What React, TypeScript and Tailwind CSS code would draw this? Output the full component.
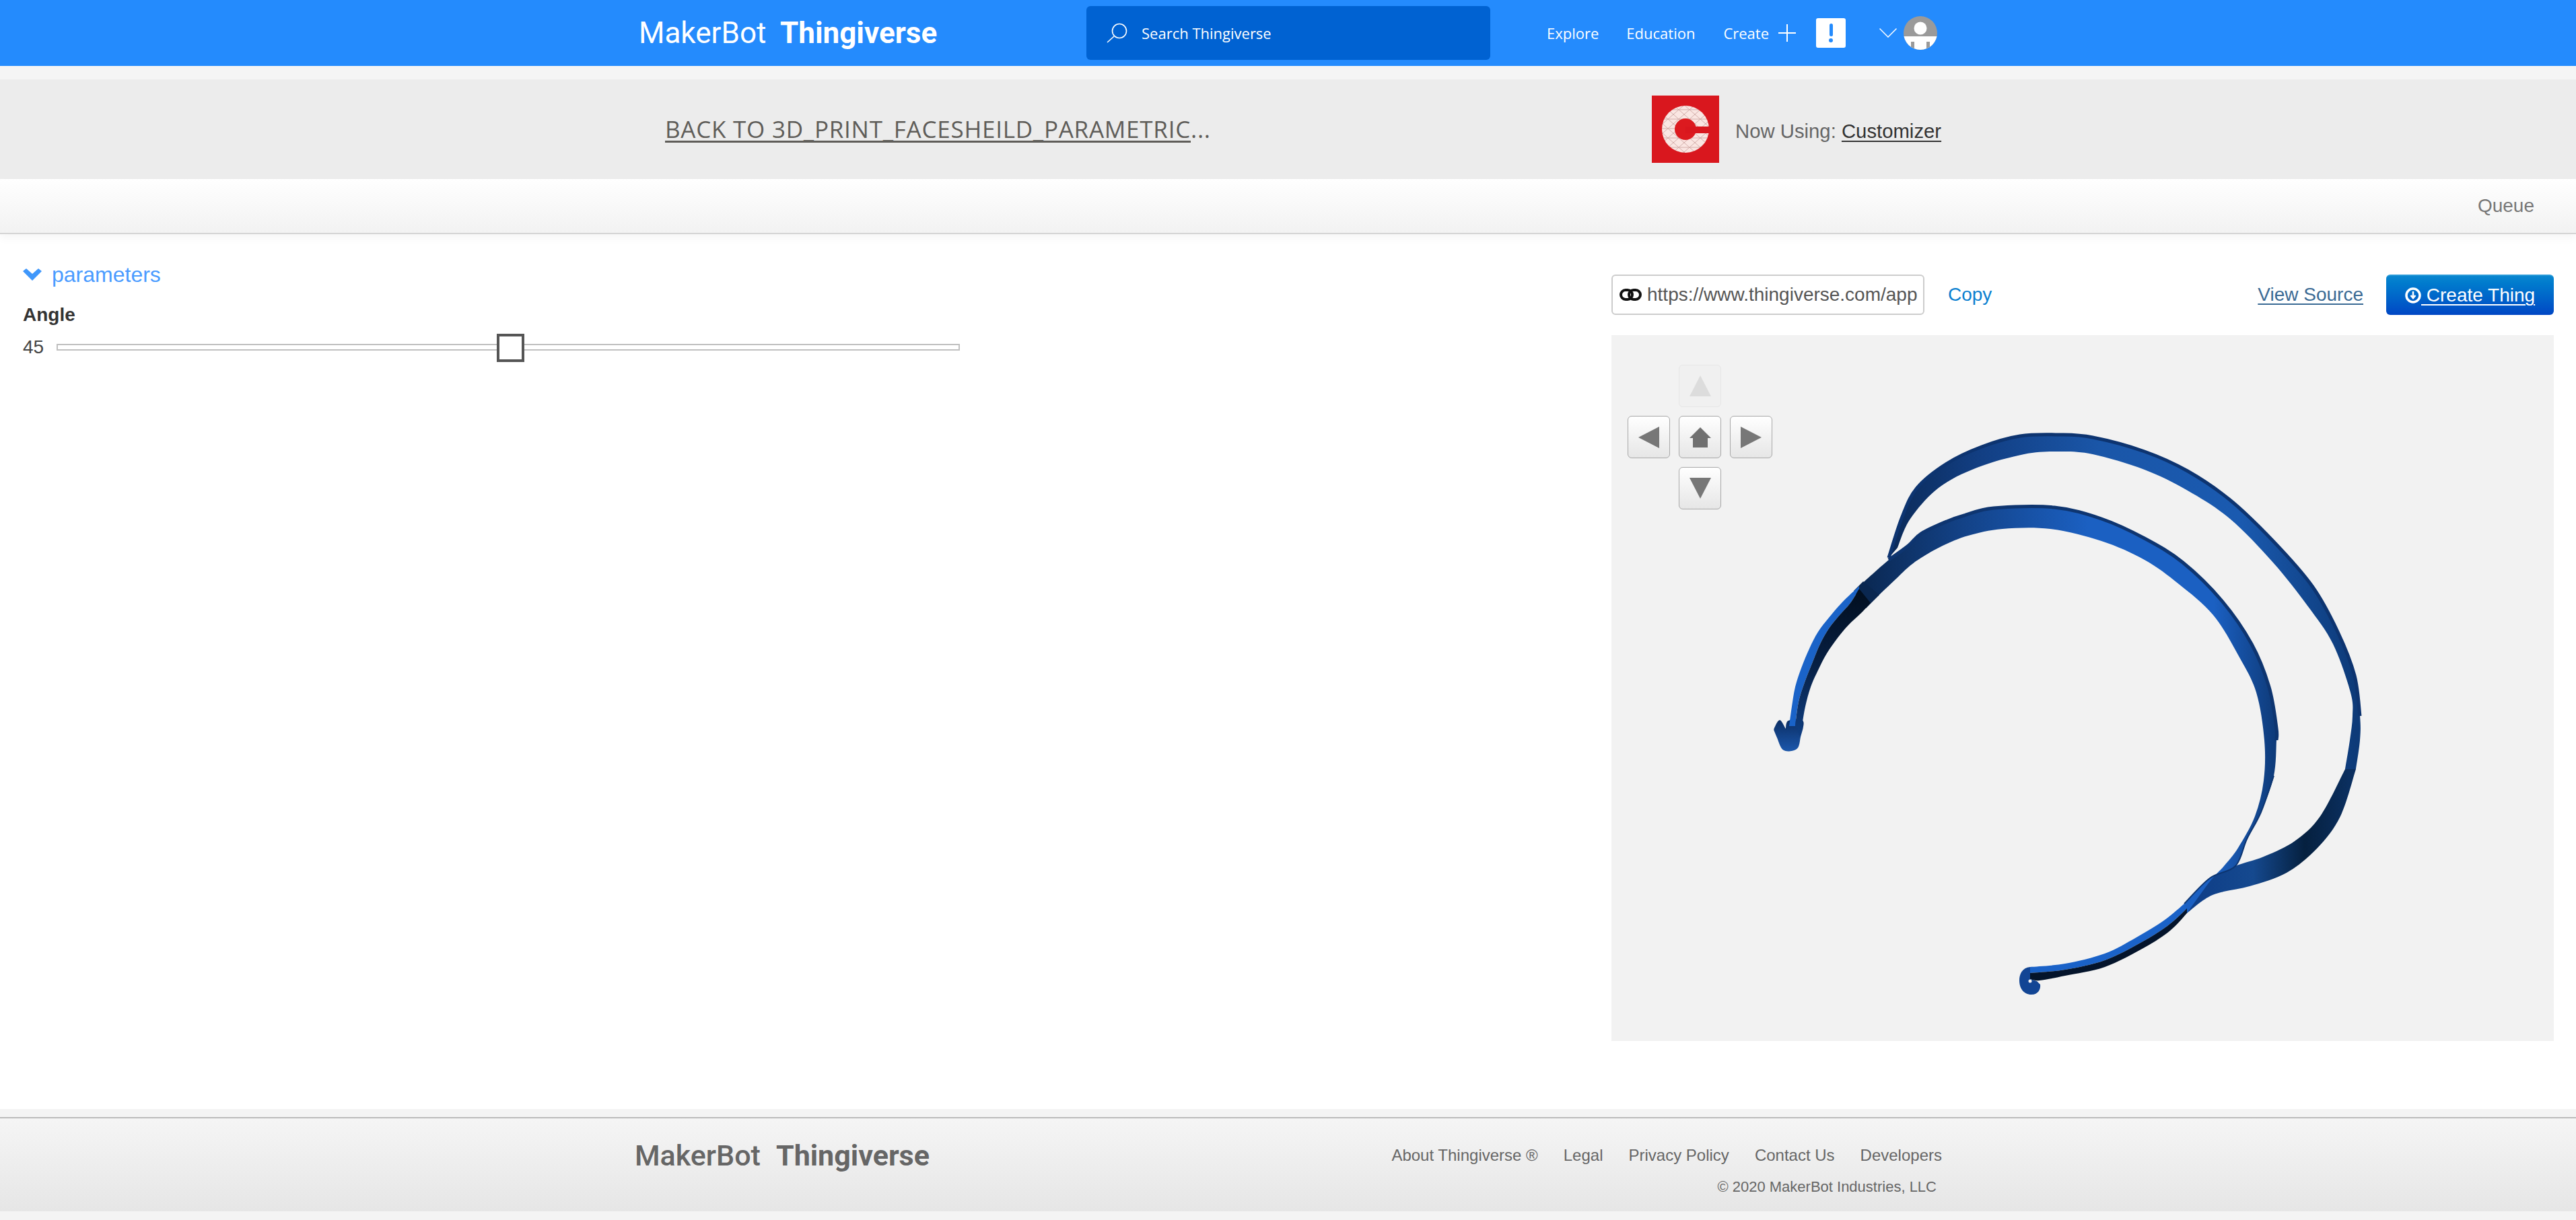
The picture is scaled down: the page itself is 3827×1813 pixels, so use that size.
import React from 'react';

type Pt = [number, number];

// Catmull-Rom through the points, so the band edges stay smooth
const curve = (pts: Pt[], start = true) => {
  let d = start ? `M${pts[0][0]} ${pts[0][1]}` : `L${pts[0][0]} ${pts[0][1]}`;
  for (let i = 0; i < pts.length - 1; i++) {
    const p0 = pts[Math.max(i - 1, 0)];
    const p1 = pts[i];
    const p2 = pts[i + 1];
    const p3 = pts[Math.min(i + 2, pts.length - 1)];
    const c1x = p1[0] + (p2[0] - p0[0]) / 6;
    const c1y = p1[1] + (p2[1] - p0[1]) / 6;
    const c2x = p2[0] - (p3[0] - p1[0]) / 6;
    const c2y = p2[1] - (p3[1] - p1[1]) / 6;
    d += ` C${c1x} ${c1y} ${c2x} ${c2y} ${p2[0]} ${p2[1]}`;
  }
  return d;
};

const band = (a: Pt[], b: Pt[]) => `${curve(a)} ${curve([...b].reverse(), false)} Z`;

const upperOuter: Pt[] = [[2806, 829], [2826, 768], [2848, 725], [2892, 689], [2944, 664], [3001, 648], [3058, 646], [3109, 650], [3186, 671], [3250, 700], [3313, 743], [3377, 804], [3435, 871], [3473, 939], [3498, 1004], [3506, 1064], [3506, 1100], [3500, 1143]];
const upperInner: Pt[] = [[2819, 814], [2838, 771], [2880, 725], [2937, 695], [3007, 675], [3058, 671], [3109, 675], [3186, 698], [3250, 729], [3313, 771], [3377, 836], [3428, 900], [3466, 957], [3492, 1029], [3495, 1064], [3491, 1100], [3484, 1143]];
const lowerRightOuter: Pt[] = [[3500, 1143], [3477, 1213], [3443, 1260], [3397, 1297], [3342, 1317], [3287, 1330], [3249, 1357]];
const lowerRightInner: Pt[] = [[3484, 1143], [3447, 1213], [3409, 1250], [3363, 1273], [3321, 1287], [3285, 1305], [3245, 1343]];
const innerTop: Pt[] = [[2762, 871], [2806, 832], [2835, 811], [2854, 793], [2892, 775], [2918, 766], [2962, 755], [3052, 754], [3122, 771], [3186, 800], [3243, 836], [3301, 893], [3345, 957], [3371, 1021], [3382, 1082], [3382, 1100], [3378, 1153], [3359, 1207], [3338, 1247], [3321, 1287], [3283, 1305], [3245, 1343]];
const innerBottom: Pt[] = [[2779, 896], [2816, 861], [2835, 843], [2854, 829], [2886, 811], [2924, 796], [2975, 786], [3046, 786], [3122, 804], [3186, 832], [3237, 868], [3288, 914], [3326, 975], [3352, 1029], [3364, 1100], [3363, 1160], [3350, 1213], [3325, 1260], [3304, 1287], [3283, 1310], [3249, 1357]];
const leftOuter: Pt[] = [[2762, 871], [2736, 896], [2717, 918], [2701, 939], [2688, 964], [2676, 993], [2667, 1021], [2662, 1050], [2658, 1079]];
const leftMid: Pt[] = [[2762, 875], [2749, 896], [2733, 914], [2717, 934], [2704, 957], [2692, 986], [2681, 1014], [2672, 1043], [2667, 1079]];
const leftInner: Pt[] = [[2779, 896], [2765, 911], [2746, 929], [2730, 948], [2714, 971], [2701, 996], [2690, 1021], [2682, 1050], [2677, 1079], [2674, 1095]];
const hook: Pt[] = [[2636, 1084], [2644, 1071], [2653, 1084], [2657, 1072], [2678, 1072], [2674, 1095], [2669, 1112], [2650, 1114], [2641, 1096], [2636, 1084]];
const tailTop: Pt[] = [[3245, 1343], [3216, 1367], [3174, 1393], [3127, 1417], [3068, 1432], [3016, 1437]];
const tailMid: Pt[] = [[3249, 1350], [3220, 1376], [3180, 1401], [3127, 1427], [3068, 1441], [3016, 1446]];
const tailBottom: Pt[] = [[3249, 1357], [3224, 1383], [3186, 1408], [3127, 1437], [3068, 1450], [3030, 1457], [3016, 1455]];

const FaceShield = () => (
  <svg viewBox="2394 498 1400 1049" className="block w-full h-full">
    <defs>
      <linearGradient id="upperFill" gradientUnits="userSpaceOnUse" x1="2806" y1="0" x2="3500" y2="0">
        <stop offset="0" stopColor="#0b2a58" />
        <stop offset="0.2" stopColor="#123f84" />
        <stop offset="0.45" stopColor="#1a56a8" />
        <stop offset="0.75" stopColor="#1a5ab0" />
        <stop offset="1" stopColor="#0d3a78" />
      </linearGradient>
      <linearGradient id="lowerFill" gradientUnits="userSpaceOnUse" x1="3270" y1="0" x2="3490" y2="0">
        <stop offset="0" stopColor="#0f3f88" />
        <stop offset="0.35" stopColor="#15498f" />
        <stop offset="0.7" stopColor="#05203f" />
        <stop offset="1" stopColor="#0b2f5f" />
      </linearGradient>
      <linearGradient id="innerFill" gradientUnits="userSpaceOnUse" x1="2762" y1="0" x2="3382" y2="0">
        <stop offset="0" stopColor="#0a2750" />
        <stop offset="0.25" stopColor="#134287" />
        <stop offset="0.55" stopColor="#1b60c2" />
        <stop offset="0.85" stopColor="#1b60c2" />
        <stop offset="1" stopColor="#0e3a78" />
      </linearGradient>
      <linearGradient id="leftDark" gradientUnits="userSpaceOnUse" x1="0" y1="880" x2="0" y2="1090">
        <stop offset="0" stopColor="#020f20" />
        <stop offset="0.5" stopColor="#071f42" />
        <stop offset="1" stopColor="#0f3d80" />
      </linearGradient>
      <linearGradient id="hookFill" gradientUnits="userSpaceOnUse" x1="0" y1="1071" x2="0" y2="1114">
        <stop offset="0" stopColor="#0c2f66" />
        <stop offset="1" stopColor="#1a55a8" />
      </linearGradient>
    </defs>
    <path d={band(upperOuter, upperInner)} fill="url(#upperFill)" />
    <path d={curve(upperOuter.slice(0, 16))} fill="none" stroke="#0d3470" strokeWidth="5" />
    <path d={band(lowerRightOuter, lowerRightInner)} fill="url(#lowerFill)" />
    <path d={band(innerTop, innerBottom)} fill="url(#innerFill)" />
    <path d={curve(innerTop.slice(1, 16))} fill="none" stroke="#0e3570" strokeWidth="5" />
    <path d={curve(innerTop.slice(16))} fill="none" stroke="#0d3570" strokeWidth="2" />
    <path d={curve(hook)} fill="url(#hookFill)" stroke="url(#hookFill)" strokeWidth="2" strokeLinejoin="round" />
    {/* closes the seam where the two strips meet the joint */}
    <polygon points="2754,878 2768,864 2792,884 2772,904" fill="#0a2750" />
    <path d={band(leftOuter, leftMid)} fill="#1a63c8" />
    <path d={band(leftMid, leftInner)} fill="url(#leftDark)" />
    <path d={band(tailTop, tailMid)} fill="#1a62c8" />
    <path d={band(tailMid, tailBottom)} fill="#04142b" />
    <path d="M3016 1437 C3004 1438 3000 1448 3000 1457 C3000 1468 3006 1478 3018 1478 C3028 1478 3032 1470 3031 1463 L3026 1458 L3016 1455 L3016 1437 Z" fill="#124594" />
    <circle cx="3016" cy="1458" r="2.5" fill="#f2f2f2" />
  </svg>
);

const NavButton = ({ children, faded }: { children: React.ReactNode; faded?: boolean }) => (
  <div
    className={
      faded
        ? 'w-[63px] h-[63px] rounded-[6px] border border-[#e6e6e6] bg-[#f0f0f0] flex items-center justify-center'
        : 'w-[63px] h-[63px] rounded-[6px] border border-[#a8a8a8] bg-linear-to-b from-white to-[#e6e6e6] flex items-center justify-center'
    }
  >
    {children}
  </div>
);

const NavPad = () => (
  <div className="absolute top-[44px] left-[24px] grid grid-cols-[63px_63px_63px] gap-x-[13px] gap-y-[13px]">
    <div />
    <NavButton faded>
      <svg width="32" height="31" viewBox="0 0 32 31"><polygon points="16,0 32,31 0,31" fill="#dcdcdc" /></svg>
    </NavButton>
    <div />
    <NavButton>
      <svg width="31" height="32" viewBox="0 0 31 32"><polygon points="31,0 31,32 0,16" fill="#777777" /></svg>
    </NavButton>
    <NavButton>
      <svg width="32" height="30" viewBox="0 0 32 30"><polygon points="16,0 32,16 27,16 27,30 5,30 5,16 0,16" fill="#707070" /></svg>
    </NavButton>
    <NavButton>
      <svg width="31" height="32" viewBox="0 0 31 32"><polygon points="0,0 31,16 0,32" fill="#777777" /></svg>
    </NavButton>
    <div />
    <NavButton>
      <svg width="32" height="31" viewBox="0 0 32 31"><polygon points="0,0 32,0 16,31" fill="#777777" /></svg>
    </NavButton>
    <div />
  </div>
);

const CustomizerLogo = () => (
  <svg width="100" height="100" viewBox="0 0 100 100" className="shrink-0 block">
    <defs>
      <pattern id="lattice" width="16" height="14" patternUnits="userSpaceOnUse">
        <rect width="16" height="14" fill="#fae6e2" />
        <path d="M0 0 L16 14 M16 0 L0 14 M0 7 L16 7" stroke="#d3aeaa" strokeWidth="1" />
      </pattern>
    </defs>
    <rect width="100" height="100" fill="#d9171e" />
    <circle cx="50" cy="50" r="35" fill="url(#lattice)" />
    <circle cx="50" cy="50" r="16" fill="#dc1a1f" />
    <rect x="50" y="46" width="36" height="10" fill="#d9171e" />
  </svg>
);

const Logo = ({ footer }: { footer?: boolean }) =>
  footer ? (
    <div className="flex items-baseline font-['Roboto',sans-serif] text-[#666666] text-[43px] leading-none">
      <span className="font-medium w-[210px]">MakerBot</span>
      <span className="font-bold">Thingiverse</span>
    </div>
  ) : (
    <div className="flex items-baseline font-['Roboto',sans-serif] text-white text-[44px] leading-none w-[665px] shrink-0">
      <span className="w-[210px]">MakerBot</span>
      <span className="font-bold">Thingiverse</span>
    </div>
  );

const App = () => {
  return (
    <div className="h-[1813px] overflow-hidden bg-white text-[#555555] font-['Liberation_Sans',sans-serif]">
      {/* top bar */}
      <header className="h-[98px] bg-[#248bfd] flex items-center pl-[949px] font-['Open_Sans',sans-serif] text-white text-[22px]">
        <Logo />
        <div className="w-[600px] h-[80px] rounded-[6px] bg-[#0062d2] flex items-center pl-[30px] gap-[21px] shrink-0">
          <svg width="31" height="30" viewBox="0 0 31 30" fill="none" stroke="white" strokeWidth="1.6">
            <circle cx="19" cy="12" r="10.5" />
            <line x1="11" y1="20" x2="1" y2="29" />
          </svg>
          <span>Search Thingiverse</span>
        </div>
        <span className="ml-[84px]">Explore</span>
        <span className="ml-[41px]">Education</span>
        <span className="ml-[42px]">Create</span>
        <svg width="26" height="26" viewBox="0 0 26 26" className="ml-[14px]" stroke="white" strokeWidth="2">
          <line x1="13" y1="0" x2="13" y2="26" />
          <line x1="0" y1="13" x2="26" y2="13" />
        </svg>
        <div className="ml-[30px] w-[44px] h-[44px] rounded-[3px] bg-white flex flex-col items-center justify-center gap-[3px]">
          <div className="w-[5px] h-[19px] rounded-full bg-[#248bfd]" />
          <div className="w-[6px] h-[6px] rounded-full bg-[#248bfd]" />
        </div>
        <svg width="26" height="14" viewBox="0 0 26 14" fill="none" stroke="white" strokeWidth="1.5" className="ml-[50px]">
          <polyline points="0.5,0.5 13,13 25.5,0.5" />
        </svg>
        <svg width="50" height="50" viewBox="0 0 50 50" className="ml-[10px]">
          <defs>
            <clipPath id="avatarClip"><circle cx="25" cy="25" r="25" /></clipPath>
          </defs>
          <circle cx="25" cy="25" r="25" fill="#9a9a9a" />
          <g clipPath="url(#avatarClip)">
            <circle cx="25" cy="18" r="9.5" fill="white" />
            <rect x="0" y="30" width="50" height="20" fill="white" />
            <rect x="11" y="38" width="5" height="12" fill="#9a9a9a" />
            <rect x="34" y="38" width="5" height="12" fill="#9a9a9a" />
          </g>
        </svg>
      </header>
      <div className="h-[20px] bg-[#f5f5f5]" />

      {/* app title bar */}
      <div className="h-[148px] bg-[#ececec] flex items-center pl-[988px]">
        <div className="w-[1466px] shrink-0 font-['Open_Sans',sans-serif] text-[35px] tracking-[0.75px] text-[#5f5d59] whitespace-nowrap">
          <span className="underline decoration-[3px] underline-offset-[4px]">BACK TO 3D_PRINT_FACESHEILD_PARAMETRIC</span>
          <span>...</span>
        </div>
        <CustomizerLogo />
        <div className="ml-[24px] text-[29.3px] text-[#666666] mt-[5px] whitespace-nowrap">
          Now Using: <span className="text-[#333333] underline decoration-2 underline-offset-[4px]">Customizer</span>
        </div>
      </div>

      {/* queue bar */}
      <div className="relative h-[82px] border-b-2 border-[#d5d5d5] bg-linear-to-b from-white to-[#f2f2f2] flex items-center justify-end pr-[62px] text-[28px] text-[#777777] shadow-[0_6px_12px_rgba(0,0,0,0.04)]">
        Queue
      </div>

      <main className="flex h-[1300px]">
        {/* parameters */}
        <div className="w-[2394px] shrink-0 pl-[34px] pt-[42px]">
          <div className="flex items-center gap-[15px] h-[36px] text-[32px] text-[#4a9bff]">
            <svg width="28" height="18" viewBox="0 0 28 18" className="shrink-0">
              <polygon points="0,4 5,0 14,8 23,0 28,4 14,18" fill="#3f97fb" />
            </svg>
            <span>parameters</span>
          </div>
          <div className="mt-[26px] text-[28px] font-bold text-[#333333] leading-[32px]">Angle</div>
          <div className="mt-[16px] flex items-center">
            <span className="text-[28px] text-[#444444] w-[50px] leading-[32px]">45</span>
            <div className="relative w-[1342px] h-[10px] border-2 border-[#c0c0c0] bg-white">
              <div className="absolute left-[652px] top-[-17px] w-[41px] h-[42px] border-4 border-[#555555] bg-white" />
            </div>
          </div>
        </div>

        {/* preview */}
        <div className="w-[1400px] shrink-0 pt-[60px]">
          <div className="flex items-center h-[60px] text-[28px]">
            <div className="w-[465px] h-[60px] rounded-[6px] border-2 border-[#cccccc] flex items-center pl-[10px] gap-[8px] overflow-hidden">
              <svg width="33" height="20" viewBox="0 0 33 20" fill="none" stroke="#111111" strokeWidth="4" className="shrink-0">
                <rect x="2" y="3" width="17" height="14" rx="7" />
                <rect x="14" y="3" width="17" height="14" rx="7" />
              </svg>
              <span className="whitespace-nowrap">https://www.thingiverse.com/app</span>
            </div>
            <span className="ml-[35px] text-[#0a7fd0]">Copy</span>
            <span className="ml-auto text-[#3a6a94] underline decoration-2 underline-offset-[4px]">View Source</span>
            <div className="ml-[34px] w-[249px] h-[60px] rounded-[6px] border-t-2 border-[#2a9bd8] bg-linear-to-b from-[#0a86cf] to-[#0046c4] flex items-center pl-[28px] text-white">
              <svg width="24" height="24" viewBox="0 0 24 24" fill="none" className="shrink-0">
                <circle cx="12" cy="12" r="10" stroke="white" strokeWidth="3.5" />
                <path d="M12 6 V15 M8.5 12 L12 16 L15.5 12" stroke="white" strokeWidth="2.5" />
              </svg>
              <span className="underline decoration-2 underline-offset-[4px] whitespace-pre"> Create Thing</span>
            </div>
          </div>
          <div className="relative mt-[30px] h-[1049px] bg-[#f2f2f2]">
            <FaceShield />
            <NavPad />
          </div>
        </div>
      </main>

      {/* footer */}
      <div className="h-[12px] bg-[#f4f4f4]" />
      <footer className="h-[140px] border-t-2 border-[#bbbbbb] bg-linear-to-b from-[#f5f5f5] to-[#e6e6e6] flex pl-[943px] text-[#666666]">
        <div className="w-[1120px] shrink-0 pt-[34px]">
          <Logo footer />
        </div>
        <div className="w-[822px] shrink-0 flex flex-col items-end pt-[40px]">
          <div className="flex gap-[38px] text-[24px] leading-[30px] whitespace-nowrap">
            <span>About Thingiverse ®</span>
            <span>Legal</span>
            <span>Privacy Policy</span>
            <span>Contact Us</span>
            <span>Developers</span>
          </div>
          <div className="mt-[19px] pr-[8px] text-[22px] leading-[26px] whitespace-nowrap">© 2020 MakerBot Industries, LLC</div>
        </div>
      </footer>
      <div className="h-[13px] bg-[#f4f4f4]" />
    </div>
  );
};

export default App;
